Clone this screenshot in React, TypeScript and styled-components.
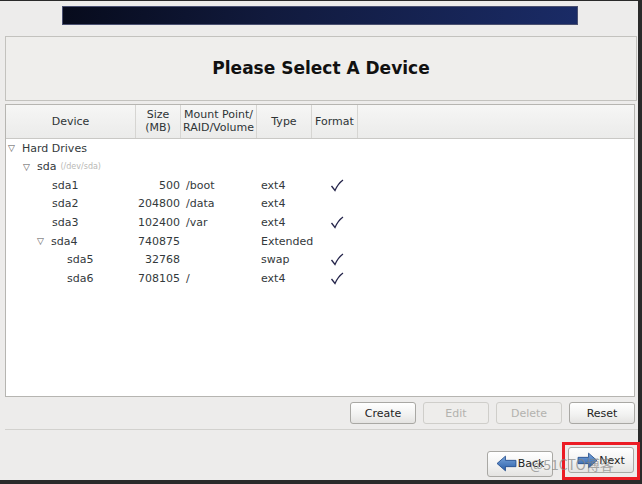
import React from 'react'
import styled, { createGlobalStyle } from 'styled-components'

const GlobalStyle = createGlobalStyle`
  html, body {
    margin: 0;
    padding: 0;
    overflow: hidden;
    background: #2a2a2a;
  }
  * { box-sizing: border-box; }
`

const Screen = styled.div`
  width: 642px;
  height: 484px;
  background: #2a2a2a;
  padding: 1px 4px 4px 0;
`

const Window = styled.div`
  position: relative;
  width: 638px;
  height: 479px;
  background: #edeceb;
  font-family: 'DejaVu Sans', sans-serif;
  font-size: 11px;
  color: #33393b;
  display: flex;
  flex-direction: column;
`

const Banner = styled.div`
  margin: 5px 0 0 62px;
  width: 516px;
  height: 19px;
  background: linear-gradient(100deg, #070b1c 0%, #111a3d 40%, #1a2b66 100%);
  border: 1px solid #4a5070;
`

const TitleBox = styled.div`
  margin: 11px 1px 0 5px;
  height: 65px;
  border: 1px solid #c3c2be;
  background: #efeeec;
  display: flex;
  align-items: center;
  justify-content: center;
`

const Title = styled.h1`
  margin: 0;
  font-size: 17px;
  font-weight: bold;
  color: #111;
  font-family: 'DejaVu Sans', sans-serif;
`

const TableFrame = styled.div`
  margin: 3px 3px 0 5px;
  height: 294px;
  border: 1px solid #b6b5b1;
  background: #fff;
  display: flex;
  flex-direction: column;
`

const HeaderRow = styled.div`
  display: flex;
  height: 34px;
  background: linear-gradient(to bottom, #f6f6f5 0%, #ebebea 100%);
  border-bottom: 1px solid #c9c8c5;
`

const HeaderCell = styled.div<{ $w: number }>`
  width: ${(p) => p.$w}px;
  flex: ${(p) => (p.$w ? 'none' : '1')};
  border-right: ${(p) => (p.$w ? '1px solid #d6d5d2' : 'none')};
  display: flex;
  align-items: center;
  justify-content: center;
  text-align: center;
  line-height: 13px;
  color: #2e3436;
`

const Body = styled.div`
  flex: 1;
`

const Row = styled.div`
  display: flex;
  height: 18.6px;
  align-items: center;
`

const NameCell = styled.div<{ $indent: number }>`
  width: 130px;
  padding-left: ${(p) => p.$indent}px;
  display: flex;
  align-items: center;
  white-space: nowrap;
`

const Expander = styled.span`
  width: 14px;
  font-size: 9px;
  color: #555;
`

const DevPath = styled.span`
  font-size: 8px;
  color: #b9b8b5;
  margin-left: 4px;
`

const SizeCell = styled.div`
  width: 45px;
  text-align: right;
  padding-right: 1px;
`

const MountCell = styled.div`
  width: 76px;
  padding-left: 5px;
`

const TypeCell = styled.div`
  width: 55px;
  padding-left: 4px;
`

const FormatCell = styled.div`
  width: 46px;
  display: flex;
  justify-content: center;
  padding-left: 3px;
`

const ActionBar = styled.div`
  display: flex;
  justify-content: flex-end;
  gap: 7px;
  padding: 5px 3px 0 0;
  height: 33px;
  border-bottom: 1px solid #d2d1ce;
  margin-left: 5px;
`

const Button = styled.button<{ $disabled?: boolean; $h?: number }>`
  width: 66px;
  height: ${(p) => p.$h ?? 22}px;
  border: 1px solid ${(p) => (p.$disabled ? '#cfceca' : '#a9a8a4')};
  border-radius: 3px;
  background: ${(p) =>
    p.$disabled ? '#eeedeb' : 'linear-gradient(to bottom, #ffffff 0%, #f1f1f0 60%, #e4e3e1 100%)'};
  color: ${(p) => (p.$disabled ? '#b3b2ae' : '#1e1e1e')};
  font-family: 'DejaVu Sans', sans-serif;
  font-size: 11px;
  padding: 0;
  display: flex;
  align-items: center;
  justify-content: center;
  gap: 1px;
`

const NavBar = styled.div`
  display: flex;
  justify-content: flex-end;
  align-items: center;
  gap: 15px;
  padding: 17px 4px 0 0;
`

const Highlight = styled.div`
  border: 3px solid #ec1c24;
  padding: 2px 3px 4px 3px;
  margin: -5px -6px 0 -6px;
`

const Watermark = styled.div`
  position: absolute;
  left: 530px;
  top: 453px;
  font-family: 'Noto Sans CJK SC', 'DejaVu Sans', sans-serif;
  font-size: 14px;
  color: rgba(130, 130, 130, 0.7);
  pointer-events: none;
`

const Check = () => (
  <svg width="14" height="13" viewBox="0 0 14 13">
    <path d="M1.5 7 L5 11.5 C7 7 9.5 3.5 13 1" fill="none" stroke="#24244a" strokeWidth="1.3" />
  </svg>
)

const Arrow = ({ dir }: { dir: 'left' | 'right' }) => (
  <svg width="21" height="17" viewBox="0 0 20 16">
    <defs>
      <linearGradient id={`ag-${dir}`} x1="0" y1="0" x2="0" y2="1">
        <stop offset="0" stopColor="#7aa6dc" />
        <stop offset="1" stopColor="#2a5ea8" />
      </linearGradient>
    </defs>
    <path
      d={
        dir === 'left'
          ? 'M1 8 L9 1 L9 5 L19 5 L19 11 L9 11 L9 15 Z'
          : 'M19 8 L11 1 L11 5 L1 5 L1 11 L11 11 L11 15 Z'
      }
      fill={`url(#ag-${dir})`}
      stroke="#1f4a8a"
      strokeWidth="0.8"
    />
  </svg>
)

type Part = {
  name: string
  indent: number
  expander?: boolean
  path?: string
  size?: string
  mount?: string
  type?: string
  format?: boolean
}

const rows: Part[] = [
  { name: 'Hard Drives', indent: 2, expander: true },
  { name: 'sda', indent: 17, expander: true, path: '(/dev/sda)' },
  { name: 'sda1', indent: 46, size: '500', mount: '/boot', type: 'ext4', format: true },
  { name: 'sda2', indent: 46, size: '204800', mount: '/data', type: 'ext4' },
  { name: 'sda3', indent: 46, size: '102400', mount: '/var', type: 'ext4', format: true },
  { name: 'sda4', indent: 31, expander: true, size: '740875', type: 'Extended' },
  { name: 'sda5', indent: 61, size: '32768', type: 'swap', format: true },
  { name: 'sda6', indent: 61, size: '708105', mount: '/', type: 'ext4', format: true },
]

export default function App() {
  return (
    <>
      <GlobalStyle />
      <Screen>
        <Window>
          <Banner />
          <TitleBox>
            <Title>Please Select A Device</Title>
          </TitleBox>
          <TableFrame>
            <HeaderRow>
              <HeaderCell $w={130}>Device</HeaderCell>
              <HeaderCell $w={45}>
                Size
                <br />
                (MB)
              </HeaderCell>
              <HeaderCell $w={76}>
                Mount Point/
                <br />
                RAID/Volume
              </HeaderCell>
              <HeaderCell $w={55}>Type</HeaderCell>
              <HeaderCell $w={46}>Format</HeaderCell>
              <HeaderCell $w={0} />
            </HeaderRow>
            <Body>
              {rows.map((r) => (
                <Row key={r.name}>
                  <NameCell $indent={r.indent}>
                    {r.expander && <Expander>▽</Expander>}
                    {r.name}
                    {r.path && <DevPath>{r.path}</DevPath>}
                  </NameCell>
                  <SizeCell>{r.size}</SizeCell>
                  <MountCell>{r.mount}</MountCell>
                  <TypeCell>{r.type}</TypeCell>
                  <FormatCell>{r.format && <Check />}</FormatCell>
                </Row>
              ))}
            </Body>
          </TableFrame>
          <ActionBar>
            <Button>Create</Button>
            <Button $disabled>Edit</Button>
            <Button $disabled>Delete</Button>
            <Button>Reset</Button>
          </ActionBar>
          <NavBar>
            <Button $h={26}>
              <Arrow dir="left" />
              Back
            </Button>
            <Highlight>
              <Button $h={26}>
                <Arrow dir="right" />
                Next
              </Button>
            </Highlight>
          </NavBar>
          <Watermark>@51CTO博客</Watermark>
        </Window>
      </Screen>
    </>
  )
}
